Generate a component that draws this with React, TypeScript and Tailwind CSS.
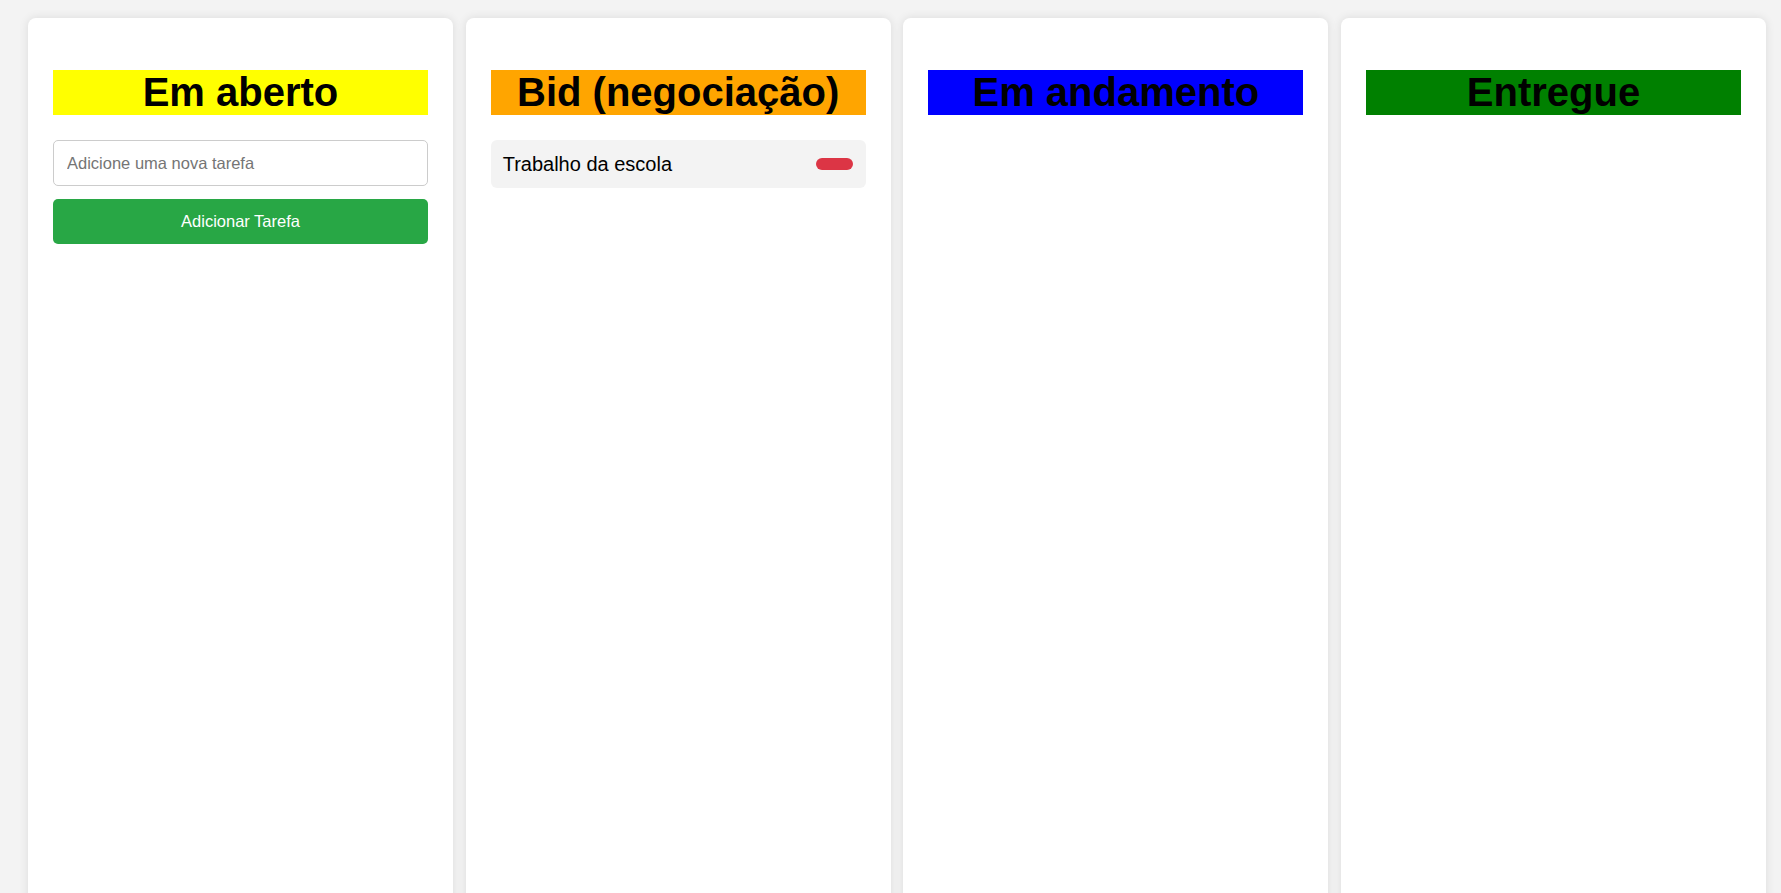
import React from "react";

const font = { fontFamily: '"Liberation Sans", Arial, sans-serif' };

function Column({
  title,
  color,
  children,
}: {
  title: string;
  color: string;
  children?: React.ReactNode;
}) {
  return (
    <div className="w-[425px] shrink-0 h-[1000px] bg-white rounded-lg shadow-[0_0_10px_rgba(0,0,0,0.1)] px-[25px] pt-[52px] flex flex-col">
      <h2
        className={`${color} text-black text-[40px] leading-[45px] font-bold text-center h-[45px]`}
      >
        {title}
      </h2>
      <div className="mt-[25px] flex flex-col">{children}</div>
    </div>
  );
}

export default function App() {
  return (
    <div
      style={font}
      className="w-full h-[893px] overflow-hidden bg-[#f3f3f3] pl-[28px] pt-[18px] flex gap-[12.67px]"
    >
      <Column title="Em aberto" color="bg-[#ffff00]">
        <input
          type="text"
          placeholder="Adicione uma nova tarefa"
          className="h-[46px] w-full border border-[#cccccc] rounded-[5px] px-[13px] text-[16.5px] text-black placeholder:text-[#757575] outline-none"
          style={font}
        />
        <button
          className="mt-[13px] h-[45px] w-full bg-[#28a745] rounded-[5px] text-white text-[16.5px]"
          style={font}
        >
          Adicionar Tarefa
        </button>
      </Column>
      <Column title="Bid (negociação)" color="bg-[#ffa500]">
        <div className="h-[48px] bg-[#f3f3f3] rounded-[6px] pl-[12px] pr-[13px] flex items-center justify-between">
          <span className="text-[20px] text-black">Trabalho da escola</span>
          <button className="w-[37px] h-[12px] bg-[#dc3545] rounded-full" />
        </div>
      </Column>
      <Column title="Em andamento" color="bg-[#0000ff]" />
      <Column title="Entregue" color="bg-[#008000]" />
    </div>
  );
}
